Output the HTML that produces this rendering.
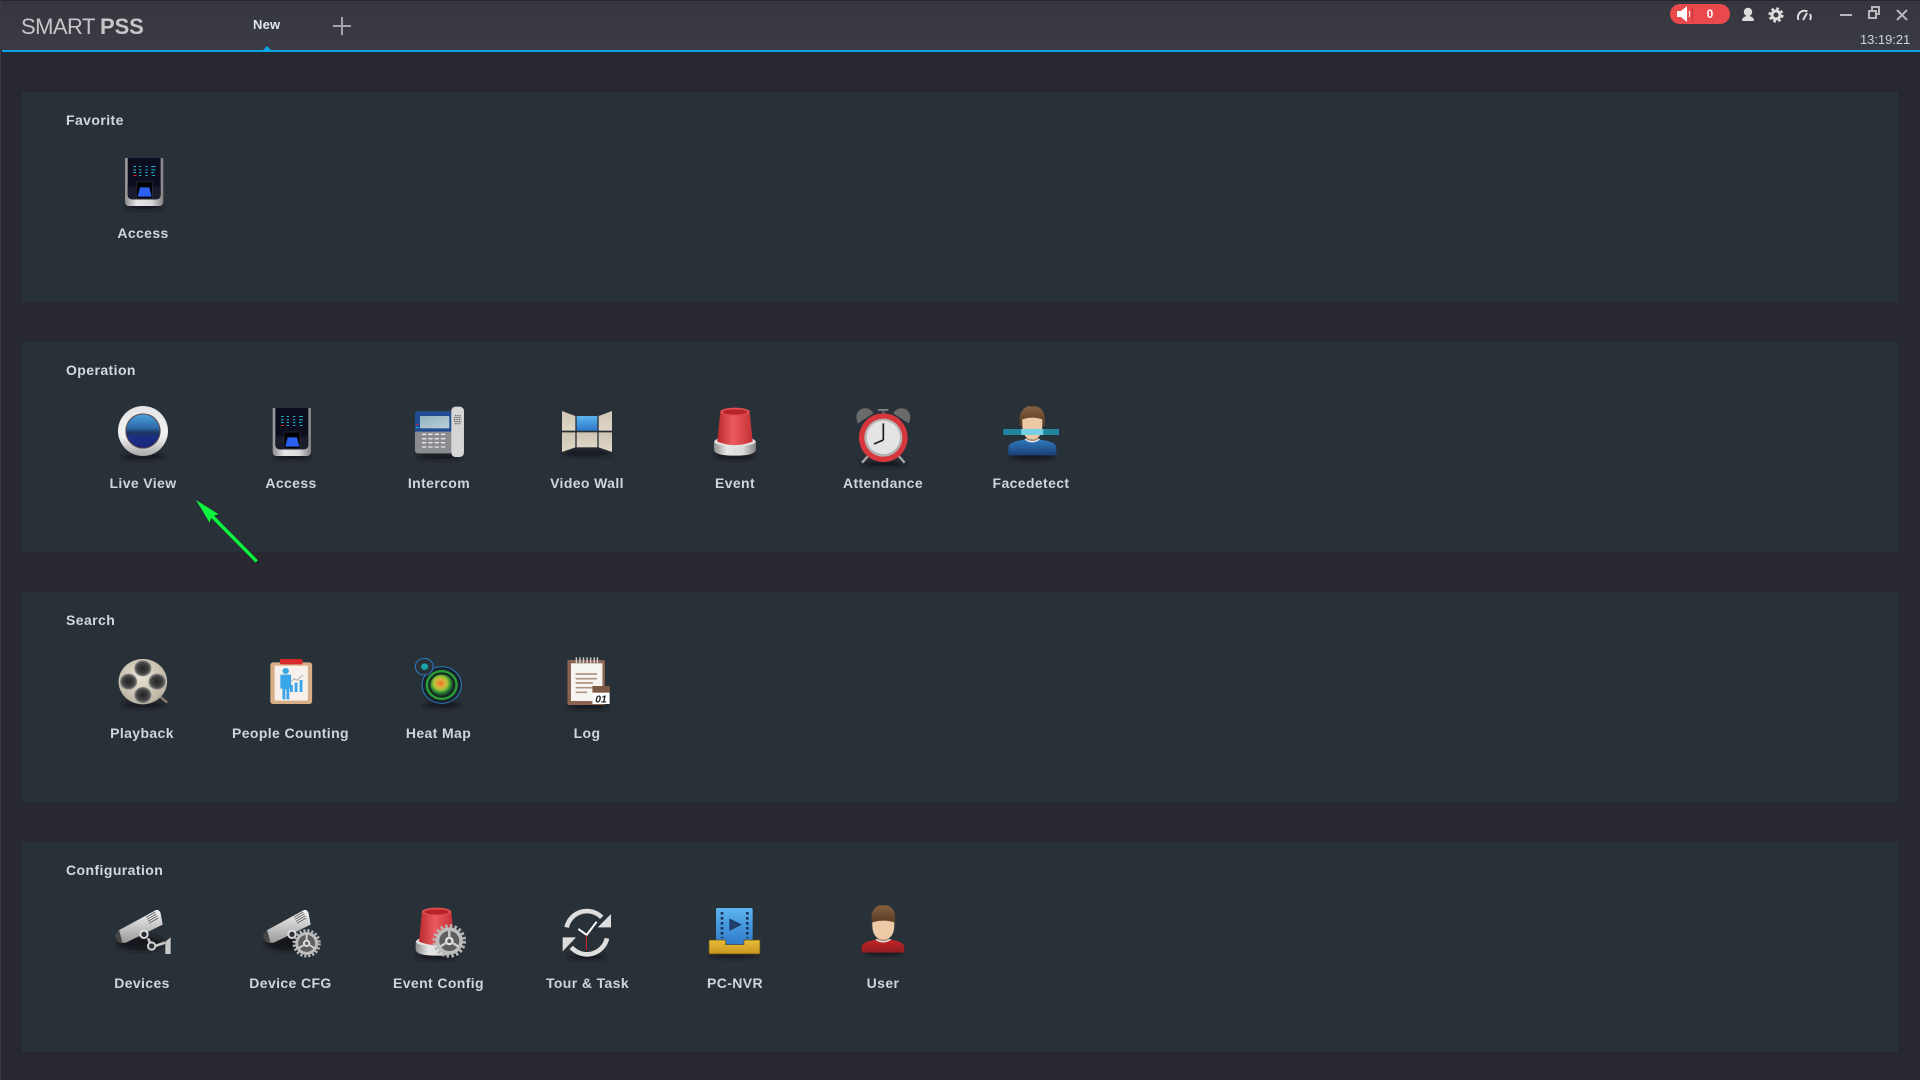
<!DOCTYPE html>
<html><head><meta charset="utf-8"><title>SMART PSS</title>
<style>
html,body{margin:0;padding:0;background:#282831;width:1920px;height:1080px;overflow:hidden}
body{position:relative;font-family:"Liberation Sans",Arial,sans-serif}
#hd{position:absolute;left:0;top:0;width:1920px;height:50px;background:linear-gradient(#36363f,#3b3b45);border-top:1px solid #24242c;box-sizing:border-box}
#ln{position:absolute;left:2px;top:50px;width:1918px;height:2px;background:#0ba3e6}
#edge{position:absolute;left:0;top:0;width:1px;height:1080px;background:#3a3a45}
.p{position:absolute;left:22px;width:1876px;height:210px;background:#293138}
.t{position:absolute;font-size:14px;font-weight:bold;color:#d4d8db;line-height:16px;white-space:nowrap;letter-spacing:.42px}
.l{position:absolute;width:148px;text-align:center;font-size:14px;font-weight:bold;color:#d0d5d8;line-height:16px;white-space:nowrap;letter-spacing:.38px}
svg{position:absolute;left:0;top:0}
</style></head><body>
<div id="hd"></div><div id="ln"></div><div id="edge"></div>
<div class="p" style="top:92px"></div><div class="p" style="top:342px"></div><div class="p" style="top:592px"></div><div class="p" style="top:842px"></div>

<div style="position:absolute;left:21px;top:14px;font-size:22px;line-height:25px;color:#c6c6c8;letter-spacing:-.55px;white-space:nowrap">SMART <b style="letter-spacing:-.1px">PSS</b></div>
<div style="position:absolute;left:253px;top:17px;font-size:13px;line-height:15px;font-weight:bold;color:#dfe6ee;letter-spacing:.2px">New</div>
<div style="position:absolute;left:1860px;top:32px;font-size:13px;line-height:15px;color:#ccd3da;white-space:nowrap;letter-spacing:-.05px">13:19:21</div>
<div style="position:absolute;left:1670px;top:4px;width:60px;height:20px;border-radius:10px;background:#e9494c"></div>
<div style="position:absolute;left:1700px;top:7px;width:20px;text-align:center;font-size:12px;line-height:15px;font-weight:bold;color:#fff">0</div>

<div class="t" style="left:66px;top:112px">Favorite</div>
<div class="t" style="left:66px;top:362px">Operation</div>
<div class="t" style="left:66px;top:612px">Search</div>
<div class="t" style="left:66px;top:862px">Configuration</div>

<div class="l" style="left:69px;top:225px">Access</div>
<div class="l" style="left:69px;top:475px">Live View</div>
<div class="l" style="left:217px;top:475px">Access</div>
<div class="l" style="left:365px;top:475px">Intercom</div>
<div class="l" style="left:513px;top:475px">Video Wall</div>
<div class="l" style="left:661px;top:475px">Event</div>
<div class="l" style="left:809px;top:475px">Attendance</div>
<div class="l" style="left:957px;top:475px">Facedetect</div>
<div class="l" style="left:68px;top:725px">Playback</div>
<div class="l" style="left:216.500px;top:725px">People Counting</div>
<div class="l" style="left:364.500px;top:725px">Heat Map</div>
<div class="l" style="left:513px;top:725px">Log</div>
<div class="l" style="left:68px;top:975px">Devices</div>
<div class="l" style="left:216.500px;top:975px">Device CFG</div>
<div class="l" style="left:364.500px;top:975px">Event Config</div>
<div class="l" style="left:513.500px;top:975px">Tour &amp; Task</div>
<div class="l" style="left:661px;top:975px">PC-NVR</div>
<div class="l" style="left:809px;top:975px">User</div>

<svg width="1920" height="1080" viewBox="0 0 1920 1080" xmlns="http://www.w3.org/2000/svg">
<defs>
<filter id="b" x="-30%" y="-60%" width="160%" height="220%"><feGaussianBlur stdDeviation="7"/></filter>
<linearGradient id="ring" x1="0" y1="0" x2="0" y2="1"><stop offset="0" stop-color="#e4e4e4"/><stop offset=".6" stop-color="#f2f2f2"/><stop offset="1" stop-color="#a9a9a9"/></linearGradient>
<linearGradient id="lens" x1="0" y1="0" x2="0" y2="1"><stop offset="0" stop-color="#4b9fe0"/><stop offset=".4" stop-color="#2f6ca8"/><stop offset=".55" stop-color="#1d3560"/><stop offset=".7" stop-color="#1a2e86"/><stop offset="1" stop-color="#1a2478"/></linearGradient>
<linearGradient id="silv" x1="0" y1="0" x2="1" y2="0"><stop offset="0" stop-color="#8d8d8d"/><stop offset=".3" stop-color="#e6e6e6"/><stop offset=".7" stop-color="#d8d8d8"/><stop offset="1" stop-color="#808080"/></linearGradient>
<linearGradient id="bezel" x1="0" y1="0" x2="0" y2="1"><stop offset="0" stop-color="#d9d9d9"/><stop offset="1" stop-color="#8f8f8f"/></linearGradient>
<linearGradient id="red" x1="0" y1="0" x2="1" y2="0"><stop offset="0" stop-color="#b82a2e"/><stop offset=".45" stop-color="#ec5a5e"/><stop offset="1" stop-color="#c23035"/></linearGradient>
<linearGradient id="beige" x1="0" y1="0" x2="0" y2="1"><stop offset="0" stop-color="#cfc5b5"/><stop offset="1" stop-color="#ded6c6"/></linearGradient>
<linearGradient id="blu" x1="0" y1="0" x2="0" y2="1"><stop offset="0" stop-color="#5cb4ee"/><stop offset="1" stop-color="#2d78c8"/></linearGradient>
<linearGradient id="hair" x1="0" y1="0" x2="0" y2="1"><stop offset="0" stop-color="#86603f"/><stop offset="1" stop-color="#553a25"/></linearGradient>
<linearGradient id="cam" x1="0" y1="0" x2="0" y2="1"><stop offset="0" stop-color="#f4f4f4"/><stop offset="1" stop-color="#9a9a9a"/></linearGradient>
<linearGradient id="shb" x1="0" y1="0" x2="0" y2="1"><stop offset="0" stop-color="#2f7cc0"/><stop offset="1" stop-color="#1b3f78"/></linearGradient>
<linearGradient id="shr" x1="0" y1="0" x2="0" y2="1"><stop offset="0" stop-color="#c92528"/><stop offset="1" stop-color="#8e1d1e"/></linearGradient>
<linearGradient id="yel" x1="0" y1="0" x2="0" y2="1"><stop offset="0" stop-color="#e8bd3a"/><stop offset="1" stop-color="#c8961e"/></linearGradient>
<linearGradient id="scr" x1="0" y1="0" x2="1" y2="1"><stop offset="0" stop-color="#8fb2c2"/><stop offset="1" stop-color="#bdcfd6"/></linearGradient>
<radialGradient id="reel" cx=".45" cy=".4" r=".7"><stop offset="0" stop-color="#eae4d4"/><stop offset=".8" stop-color="#bdb6a5"/><stop offset="1" stop-color="#77736a"/></radialGradient>
<radialGradient id="hole" cx=".5" cy=".5" r=".5"><stop offset="0" stop-color="#222"/><stop offset=".7" stop-color="#444"/><stop offset="1" stop-color="#8c8c8c"/></radialGradient>
<radialGradient id="heat" cx=".45" cy=".42" r=".55"><stop offset="0" stop-color="#ee6a28"/><stop offset=".3" stop-color="#e0a83a"/><stop offset=".55" stop-color="#a8c53a"/><stop offset=".8" stop-color="#2e8c34"/><stop offset="1" stop-color="#1a4a2a"/></radialGradient>

<g id="access">
 <ellipse cx="606" cy="200" rx="58" ry="8" fill="#14181c" filter="url(#b)"/>
 <path d="M548 54H663V184Q663 198 650 198H561Q548 198 548 184Z" fill="url(#silv)"/>
 <path d="M556 54H655V164Q655 178 641 178H570Q556 178 556 164Z" fill="#0c0e20"/>
 <path d="M556 140H655V164Q655 178 641 178H570Q556 178 556 164Z" fill="#1a1b2c"/>
 <path d="M573 78h8v3h-8zM590 78h7v3h-7zM609 78h7v3h-7zM627 78h12v3h-12zM573 88h8v3h-8zM590 88h7v3h-7zM609 88h7v3h-7zM627 88h12v3h-12zM573 96h8v3h-8zM590 96h7v3h-7zM609 96h7v3h-7zM627 96h8v3h-8zM590 105h7v3h-7zM609 105h7v3h-7zM630 105h8v3h-8z" fill="#19b5c6"/>
 <rect x="573" y="105" width="10" height="3" fill="#d8262c"/>
 <rect x="582" y="126" width="48" height="50" fill="#000" stroke="#30303a" stroke-width="2"/>
 <path d="M593 142H621L628 170H586Z" fill="#2a5ff0"/>
</g>
<g id="cup">
 <ellipse cx="645" cy="198" rx="62" ry="10" fill="#14181c" filter="url(#b)"/>
 <path d="M582 160Q582 146 600 146H690Q708 146 708 160V178Q708 197 645 197Q582 197 582 178Z" fill="url(#silv)"/>
 <ellipse cx="645" cy="155" rx="62" ry="14" fill="#e2e2e2"/>
 <path d="M601 65L592 155Q645 176 698 155L689 65Z" fill="url(#red)"/>
 <ellipse cx="645" cy="65" rx="44" ry="12" fill="#e44f52"/>
 <ellipse cx="645" cy="66" rx="37" ry="8" fill="#b82428"/>
</g>
<g id="camb">
 <ellipse cx="150" cy="160" rx="70" ry="22" fill="#14181c" filter="url(#b)"/>
 <path d="M76 136L88 120L198 60Q208 58 212 70L218 104L108 158Q94 160 82 152Z" fill="url(#cam)"/>
 <path d="M88 122L74 136L82 153L97 156Z" fill="#454545"/>
 <path d="M168 82L196 66M171 88L199 72M174 94L202 78M177 100L205 84" stroke="#555" stroke-width="2.4"/>
 <circle cx="162" cy="133" r="11" fill="#292f35" stroke="#dcdcdc" stroke-width="6"/>
</g>
<g id="gear">
 <circle r="30" fill="#5e5e5e" stroke="#bdbdbd" stroke-width="9"/>
 <circle r="38" fill="none" stroke="#b5b5b5" stroke-width="9" stroke-dasharray="6.5 5.5"/>
 <circle r="8" fill="none" stroke="#e0e0e0" stroke-width="6"/>
 <path d="M0-26V-8M-23 14L-7 4M23 14L7 4" stroke="#cfcfcf" stroke-width="6"/>
</g>
<g id="person">
 <ellipse cx="0" cy="150" rx="68" ry="12" fill="#14181c" filter="url(#b)"/>
 <path d="M-10 0C-3 4 6-1 10 1C28 4 38 18 38 42V60H-38V38C-38 18-26 4-10 0Z" fill="url(#hair)"/>
 <rect x="-18" y="92" width="36" height="24" fill="#b0917a"/>
</g>
</defs>

<!-- top bar icons -->
<path d="M262 51L267 46L272 51Z" fill="#0ba3e6"/>
<path d="M333 26H351M342 17V35" stroke="#a5a5ad" stroke-width="2" fill="none"/>
<path d="M1677 11H1681L1687 6V22L1681 17H1677Z" fill="#fff"/>
<path d="M1689 11Q1690.500 14 1689 17" stroke="#fff" stroke-width="1" fill="none"/>
<rect x="1692" y="7" width="1" height="14" fill="#c83639"/>
<circle cx="1748" cy="12" r="4.200" fill="#dcdcdc"/><path d="M1742 21Q1742 17 1746.500 16H1749.500Q1754 17 1754 21Z" fill="#dcdcdc"/>
<g transform="translate(1776,15)" fill="none" stroke="#dcdcdc"><circle r="4" stroke-width="3"/><circle r="6.200" stroke-width="2.800" stroke-dasharray="2.600 2.270"/></g>
<path d="M1798.500 20A6.500 6.500 0 0 1 1807.500 11.500M1810 14A6.500 6.500 0 0 1 1810 20" fill="none" stroke="#dcdcdc" stroke-width="2"/><path d="M1803 20L1807 13" stroke="#dcdcdc" stroke-width="2"/>
<rect x="1840" y="14" width="12" height="2" fill="#b8b8bc"/>
<path d="M1872 10V7H1879V14H1876" fill="none" stroke="#b8b8bc" stroke-width="2"/><rect x="1869" y="11" width="7" height="7" fill="none" stroke="#b8b8bc" stroke-width="2"/>
<path d="M1897 10L1907 20M1907 10L1897 20" stroke="#b8b8bc" stroke-width="2"/>

<!-- Favorite Access -->
<g transform="translate(100,140) scale(.3333)"><use href="#access" transform="translate(-473,0)"/></g>

<!-- Operation row -->
<g transform="translate(90,390) scale(.3333)">
 <ellipse cx="159" cy="200" rx="66" ry="9" fill="#14181c" filter="url(#b)"/>
 <circle cx="159" cy="123" r="75" fill="url(#ring)"/>
 <circle cx="159" cy="123" r="53" fill="#5a4a4a"/>
 <circle cx="159" cy="123" r="50" fill="url(#lens)"/>
 <use href="#access"/>
 <!-- intercom -->
 <ellipse cx="1048" cy="200" rx="70" ry="8" fill="#14181c" filter="url(#b)"/>
 <rect x="975" y="64" width="112" height="126" rx="8" fill="#8b8c90"/>
 <path d="M983 64H1087V125H975V72Q975 64 983 64Z" fill="#1f4c92"/>
 <rect x="990" y="78" width="88" height="37" fill="url(#scr)"/>
 <path d="M978 102h7v3h-7z" fill="#d8262c"/><path d="M978 111h7v3h-7z" fill="#19b5c6"/>
 <path d="M996 133H1072M996 146H1072M996 158H1072M996 171H1072" stroke="#e8e8e8" stroke-width="4" stroke-dasharray="13 6"/>
 <rect x="1084" y="50" width="38" height="151" rx="13" fill="#d6d6d6"/>
 <path d="M1095 77H1112M1092 83H1114M1092 89H1114M1092 95H1114M1095 101H1112" stroke="#555" stroke-width="3.500" stroke-dasharray="3 2"/>
</g>
<g transform="translate(520,390) scale(.3333)">
 <ellipse cx="200" cy="190" rx="76" ry="9" fill="#14181c" filter="url(#b)"/>
 <path d="M126 63L166 78V122H126Z" fill="url(#beige)"/><path d="M126 127H166V172L126 186Z" fill="url(#beige)"/>
 <path d="M276 63L236 78V122H276Z" fill="url(#beige)"/><path d="M276 127H236V172L276 186Z" fill="url(#beige)"/>
 <rect x="170" y="78" width="62" height="44" fill="url(#blu)"/>
 <rect x="170" y="127" width="62" height="45" fill="url(#beige)"/>
 <use href="#cup"/>
</g>
<g transform="translate(800,390) scale(.3333)">
 <ellipse cx="250" cy="222" rx="70" ry="8" fill="#14181c" filter="url(#b)"/>
 <path d="M174 100C160 72 178 52 200 55C210 57 217 63 220 70Z" fill="#6a6a6a"/><path d="M326 100C340 72 322 52 300 55C290 57 283 63 280 70Z" fill="#6a6a6a"/>
 <rect x="234" y="57" width="31" height="5" fill="#8a8a8a"/><rect x="247" y="60" width="6" height="12" fill="#6a6a6a"/>
 <path d="M186 218L206 196M314 218L294 196" stroke="#a8a8a8" stroke-width="7"/>
 <circle cx="250" cy="143" r="73" fill="#d7373c"/>
 <circle cx="250" cy="143" r="57" fill="#b5b5b5"/>
 <circle cx="250" cy="143" r="52" fill="url(#bezel)" opacity=".6"/>
 <circle cx="250" cy="143" r="50" fill="#e4e4e4"/>
 <path d="M250 150V100M250 150L222 162" stroke="#1a1a1a" stroke-width="5" fill="none"/>
 <!-- facedetect -->
 <g transform="translate(697,48)">
  <use href="#person"/>
  <path d="M-72 148V125Q-72 110-40 104L-18 100Q0 112 18 100L40 104Q72 110 72 125V148Z" fill="url(#shb)"/>
  <path d="M-22 99Q0 116 22 99" stroke="#e8e8e8" stroke-width="4" fill="none"/>
  <path d="M-30 40V58Q-30 98 0 100Q30 98 30 58V40Q0 30-30 40Z" fill="#edc9a6"/>
  <rect x="-87" y="69" width="167" height="18" fill="#22849e"/>
  <rect x="-33" y="69" width="66" height="18" fill="#78cfe3"/>
 </g>
</g>

<!-- Search row: crop was 2.8x horizontally, 3x vertically -->
<g transform="translate(90,640) scale(.3571,.3333)">
 <ellipse cx="148" cy="195" rx="62" ry="9" fill="#14181c" filter="url(#b)"/>
 <path d="M195 168L216 188" stroke="#8b7868" stroke-width="7"/>
 <circle cx="148" cy="125" r="68" fill="url(#reel)"/>
 <ellipse cx="148" cy="85" rx="24" ry="24" fill="url(#hole)"/><ellipse cx="148" cy="165" rx="24" ry="24" fill="url(#hole)"/>
 <ellipse cx="108" cy="125" rx="24" ry="24" fill="url(#hole)"/><ellipse cx="188" cy="125" rx="24" ry="24" fill="url(#hole)"/>
 <!-- people counting -->
 <rect x="505" y="67" width="117" height="125" rx="8" fill="#d7ae87"/>
 <rect x="517" y="77" width="93" height="105" fill="#f8f0ea"/>
 <rect x="532" y="57" width="63" height="16" rx="3" fill="#d8292d"/>
 <g fill="#39a6ea"><circle cx="548" cy="93" r="9"/><path d="M533 104H563V146H558V178H550V148H547V178H539V146H533Z"/>
 <rect x="560" y="135" width="8" height="21"/><rect x="573" y="128" width="8" height="28"/><rect x="587" y="120" width="8" height="36"/></g>
 <path d="M560 128L572 116L580 121L596 105" stroke="#8a9aa8" stroke-width="2" fill="none"/>
 <!-- heat map -->
 <ellipse cx="985" cy="195" rx="52" ry="9" fill="#14181c" filter="url(#b)"/>
 <circle cx="985" cy="135" r="55" fill="#17222a" stroke="#2d77bd" stroke-width="3"/>
 <circle cx="985" cy="135" r="45" fill="#2a9e36"/><circle cx="985" cy="135" r="38" fill="#17261e"/>
 <circle cx="985" cy="135" r="32" fill="url(#heat)"/>
 <circle cx="936" cy="80" r="25" fill="#293138" stroke="#2d77bd" stroke-width="3"/>
 <circle cx="937" cy="80" r="10" fill="#1ca0a8"/>
 <!-- log -->
 <ellipse cx="1395" cy="200" rx="58" ry="8" fill="#14181c" filter="url(#b)"/>
 <rect x="1337" y="60" width="105" height="135" rx="4" fill="#8a6450"/>
 <rect x="1347" y="70" width="88" height="113" fill="#f7f5f2"/>
 <path d="M1362 52V72M1372 52V72M1382 52V72M1392 52V72M1402 52V72M1412 52V72M1421 52V72" stroke="#cfcfcf" stroke-width="4"/>
 <path d="M1360 102H1420M1360 116H1420M1360 129H1408M1360 143H1408M1360 157H1392" stroke="#b09482" stroke-width="5"/>
 <rect x="1407" y="138" width="48" height="54" fill="#fff"/>
 <rect x="1407" y="138" width="48" height="20" fill="#7e5a46"/>
 <text x="1431" y="187" text-anchor="middle" font-family="Liberation Sans,sans-serif" font-weight="bold" font-style="italic" font-size="29" fill="#222">01</text>
</g>

<!-- Config row -->
<g transform="translate(90,890) scale(.3333)">
 <use href="#camb"/>
 <path d="M174 145L185 168M196 168L225 158" stroke="#c9c9c9" stroke-width="8"/>
 <circle cx="185" cy="168" r="11" fill="#292f35" stroke="#cfcfcf" stroke-width="6"/>
 <path d="M226 155L242 142V192H226Z" fill="#c9c9c9"/>
 <use href="#camb" transform="translate(444,0)"/>
 <g transform="translate(650,160)"><use href="#gear"/></g>
 <use href="#cup" transform="translate(395,0)"/>
 <g transform="translate(1078,153) scale(1.18)"><use href="#gear"/></g>
</g>
<g transform="translate(530,890) scale(.3333)">
 <ellipse cx="170" cy="200" rx="60" ry="8" fill="#14181c" filter="url(#b)"/>
 <g fill="none" stroke="#dedede" stroke-width="14">
  <path d="M110 112A62 62 0 0 1 215 82"/>
  <path d="M231 145A62 62 0 0 1 124 172"/>
 </g>
 <path d="M203 112H243L243 72Z" fill="#dedede"/><path d="M98 142H138L98 184Z" fill="#dedede"/>
 <path d="M145 117L170 135L200 95" fill="none" stroke="#fff" stroke-width="6"/>
 <path d="M169 135V180" stroke="#e22" stroke-width="2.500"/>
 <!-- PC-NVR -->
 <ellipse cx="613" cy="197" rx="76" ry="7" fill="#14181c" filter="url(#b)"/>
 <rect x="558" y="54" width="110" height="115" rx="5" fill="url(#blu)"/>
 <path d="M576 66V144" stroke="#17375c" stroke-width="8" stroke-dasharray="8 7"/>
 <path d="M652 66V144" stroke="#17375c" stroke-width="8" stroke-dasharray="8 7"/>
 <path d="M598 85L636 104L598 123Z" fill="#1d3f68"/>
 <path d="M537 150H587V164H642V150H690V192H537Z" fill="url(#yel)" stroke="#5d4a14" stroke-width="2"/>
 <!-- User -->
 <g transform="translate(1060,45)">
  <use href="#person" transform="scale(.93)"/>
  <path d="M-65 143V128Q-65 114-40 108L-20 103Q0 116 20 103L40 108Q63 114 63 128V143Z" fill="url(#shr)"/>
  <path d="M-22 103Q0 118 22 103" stroke="#e8e8e8" stroke-width="4" fill="none"/>
  <path d="M-33 60Q-33 102 0 104Q33 102 33 60V52Q0 42-33 52Z" fill="#edc9a6"/>
 </g>
</g>

<!-- green arrow -->
<g transform="translate(90,390) scale(.3333)">
 <path d="M318 330L386 373L372 377L504 511L497 518L364 384L359 398Z" fill="#0c1a12" opacity=".5" transform="translate(3,3)"/>
 <path d="M318 330L386 373L372 377L504 511L497 518L364 384L359 398Z" fill="#0cf53c"/>
</g>
</svg>
</body></html>
